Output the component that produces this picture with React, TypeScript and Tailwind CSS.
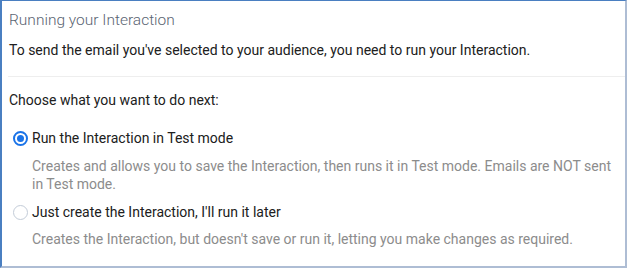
import React from "react";

function Radio({ checked }: { checked: boolean }) {
  return checked ? (
    <span className="flex h-[15px] w-[15px] shrink-0 items-center justify-center rounded-full border-2 border-[#1a73e8] bg-white">
      <span className="h-[7px] w-[7px] rounded-full bg-[#1a73e8]" />
    </span>
  ) : (
    <span className="h-[15px] w-[15px] shrink-0 rounded-full border border-[#c3ccd8] bg-white" />
  );
}

export default function App() {
  return (
    <div
      className="h-[268px] w-[627px] overflow-hidden border-t border-l-2 border-r-2 border-b-2 border-t-[#4a7fc1] border-l-[#4a7fc1] border-r-[#aebdd4] border-b-[#aebdd4] bg-white"
      style={{ fontFamily: "Roboto, 'Liberation Sans', sans-serif" }}
    >
      <div className="pl-[7px] pt-[9px]">
        <div className="text-[15.5px] leading-[20px] font-light text-[#5a6472]">Running your Interaction</div>
        <div className="mt-[10px] text-[14px] leading-[20px] text-[#202020]">
          To send the email you've selected to your audience, you need to run your Interaction.
        </div>
      </div>
      <div className="ml-[6px] mt-[16px] h-px bg-[#eeeeee]" />
      <div className="pl-[7px]">
        <div className="mt-[13px] text-[14px] leading-[20px] text-[#202020]">Choose what you want to do next:</div>
        <div className="mt-[18px] flex items-center gap-[4px] pl-[4px]">
          <Radio checked />
          <span className="text-[14px] leading-[20px] text-[#202020]">Run the Interaction in Test mode</span>
        </div>
        <div className="mt-[9px] pl-[23px] pr-[6px] text-[14px] leading-[18px] text-[#8c8c8c]">
          Creates and allows you to save the Interaction, then runs it in Test mode. Emails are NOT sent in Test mode.
        </div>
        <div className="mt-[9px] flex items-center gap-[4px] pl-[4px]">
          <Radio checked={false} />
          <span className="text-[14px] leading-[20px] text-[#202020]">Just create the Interaction, I'll run it later</span>
        </div>
        <div className="mt-[8px] pl-[23px] text-[14px] leading-[18px] text-[#8c8c8c]">
          Creates the Interaction, but doesn't save or run it, letting you make changes as required.
        </div>
      </div>
    </div>
  );
}
